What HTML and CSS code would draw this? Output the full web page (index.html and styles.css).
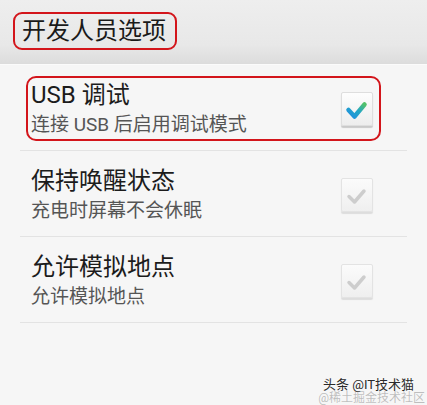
FILE: index.html
```html
<!DOCTYPE html>
<html lang="zh">
<head>
<meta charset="utf-8">
<link rel="stylesheet" href="styles.css">
</head>
<body>
<header class="header">
  <h1 class="header-title">开发人员选项</h1>
</header>
<ul class="list">
  <li class="row row-marked">
    <div class="text">
      <div class="title">USB 调试</div>
      <div class="summary">连接 USB 后启用调试模式</div>
    </div>
    <span class="check check-on">
      <svg viewBox="0 0 32 34" width="32" height="34">
        <defs>
          <linearGradient id="tick" x1="0" y1="1" x2="1" y2="0">
            <stop offset="0" stop-color="#1e8fe0"/>
            <stop offset="0.55" stop-color="#23a7c4"/>
            <stop offset="1" stop-color="#53c16a"/>
          </linearGradient>
        </defs>
        <path d="M7.5 18 L13.5 24.5 L23.5 12.5" fill="none" stroke="url(#tick)" stroke-width="4.5" stroke-linecap="round" stroke-linejoin="round"/>
      </svg>
    </span>
  </li>
  <li class="row">
    <div class="text">
      <div class="title">保持唤醒状态</div>
      <div class="summary">充电时屏幕不会休眠</div>
    </div>
    <span class="check check-off">
      <svg viewBox="0 0 32 34" width="32" height="34">
        <path d="M8 18.5 L13.5 24 L23 13" fill="none" stroke="#cdcdcd" stroke-width="3.5" stroke-linecap="round" stroke-linejoin="round"/>
      </svg>
    </span>
  </li>
  <li class="row">
    <div class="text">
      <div class="title">允许模拟地点</div>
      <div class="summary">允许模拟地点</div>
    </div>
    <span class="check check-off">
      <svg viewBox="0 0 32 34" width="32" height="34">
        <path d="M8 18.5 L13.5 24 L23 13" fill="none" stroke="#cdcdcd" stroke-width="3.5" stroke-linecap="round" stroke-linejoin="round"/>
      </svg>
    </span>
  </li>
</ul>
<div class="watermark">
  <div class="wm-main">头条 @IT技术猫</div>
  <div class="wm-sub">@稀土掘金技术社区</div>
</div>
</body>
</html>
```
FILE: styles.css
```css
html, body {
  margin: 0;
  padding: 0;
}
body {
  width: 427px;
  height: 405px;
  overflow: hidden;
  background: #f6f6f6;
  font-family: "Roboto", "Noto Sans CJK SC", sans-serif;
  color: #1c1c1c;
  position: relative;
}
.header {
  height: 65px;
  box-sizing: border-box;
  padding: 0 0 2px 13px;
  display: flex;
  align-items: center;
  background: linear-gradient(#eeeeee 0%, #e8e8e8 70%, #dcdcdc 100%);
  border-bottom: 1px solid #fbfbfb;
}
.header-title {
  margin: 0;
  font-weight: normal;
  font-size: 24px;
  line-height: 34px;
  height: 34px;
  padding: 0 9px 0 7px;
  border: 2px solid #d3151b;
  border-radius: 9px;
  color: #1a1a1a;
}
.list {
  list-style: none;
  margin: 0 20px;
  padding: 0;
}
.row {
  position: relative;
  height: 86px;
  box-sizing: border-box;
  border-bottom: 1px solid #e3e3e3;
  display: flex;
  align-items: center;
  justify-content: space-between;
  padding: 2px 34px 0 11px;
}
.row-marked::after {
  content: "";
  position: absolute;
  left: 6px;
  right: 26px;
  top: 11px;
  bottom: 9px;
  border: 2px solid #d3151b;
  border-radius: 10px;
}
.text {
  display: flex;
  flex-direction: column;
  gap: 3px;
}
.title {
  font-size: 24px;
  line-height: 30px;
  color: #1c1c1c;
}
.summary {
  font-size: 19px;
  line-height: 24px;
  color: #555555;
}
.check {
  width: 32px;
  height: 34px;
  box-sizing: border-box;
  border: 1px solid #dedede;
  border-radius: 2px;
  background: linear-gradient(#fdfdfd, #ededed);
  box-shadow: 0 2px 1px rgba(0, 0, 0, 0.18);
  display: flex;
}
.check svg {
  margin: -1px;
}
.check-off {
  background: linear-gradient(#fbfbfb, #efefef);
  border-color: #e3e3e3;
  box-shadow: 0 2px 1px rgba(0, 0, 0, 0.1);
}
.watermark {
  position: absolute;
  right: 2px;
  bottom: 0;
  text-align: right;
}
.wm-main {
  font-size: 13px;
  line-height: 14px;
  color: #2a2a2a;
  margin-right: 11px;
  text-shadow: 0 0 2px #fff;
}
.wm-sub {
  font-size: 12px;
  line-height: 13px;
  color: rgba(120, 120, 120, 0.45);
}
```
